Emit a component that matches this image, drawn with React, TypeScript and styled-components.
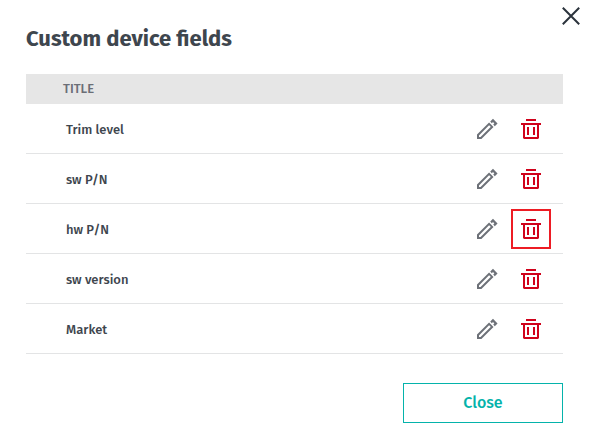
import React from "react";
import styled, { createGlobalStyle } from "styled-components";

const GlobalStyle = createGlobalStyle`
  *, *::before, *::after { box-sizing: border-box; }
  body {
    margin: 0;
    background: #fff;
    color: #3e464e;
    font-family: "Fira Sans", "Noto Sans", sans-serif;
    overflow: hidden;
  }
`;

const Dialog = styled.main`
  position: relative;
  width: 589px;
  height: 428px;
  padding: 24px 26px 5px;
  display: flex;
  flex-direction: column;
  background: #fff;
`;

const DismissButton = styled.button`
  position: absolute;
  top: 6px;
  right: 8px;
  width: 20px;
  height: 20px;
  padding: 0;
  border: 0;
  background: none;
  color: #2b333c;
  svg { display: block; }
`;

const Heading = styled.h1`
  margin: 0 0 20px;
  height: 30px;
  font-size: 22px;
  line-height: 30px;
  font-weight: 700;
  white-space: nowrap;
`;

const Table = styled.section`
  width: 537px;
`;

const TableHeader = styled.div`
  height: 30px;
  padding-left: 37px;
  background: #e6e6e6;
  color: #6b6e76;
  font-size: 13px;
  line-height: 30px;
  font-weight: 500;
`;

const Row = styled.div`
  height: 50px;
  padding: 0 12px 0 40px;
  display: flex;
  align-items: center;
  border-bottom: 1px solid #e3e4e5;
`;

const FieldName = styled.div`
  flex: 1;
  padding-top: 2px;
  font-size: 13px;
  line-height: 20px;
  font-weight: 500;
  white-space: nowrap;
`;

const IconButton = styled.button<{ $tone: string; $outlined?: boolean }>`
  width: 40px;
  height: 40px;
  margin: 1px 0 0 4px;
  padding: 0;
  display: flex;
  align-items: center;
  justify-content: center;
  border: 2px solid ${(p) => (p.$outlined ? "#ed1c24" : "transparent")};
  background: none;
  color: ${(p) => p.$tone};
  svg { display: block; }
`;

const CloseButton = styled.button`
  width: 160px;
  height: 40px;
  margin: 29px 0 0 377px;
  padding: 0;
  border: 1px solid #05b3ab;
  background: #fff;
  color: #05b3ab;
  font: 500 16px/24px "Fira Sans", "Noto Sans", sans-serif;
`;

const PencilIcon = () => (
  <svg width="22" height="22" viewBox="0 0 22 22" fill="none" stroke="currentColor" strokeWidth="2">
    <path d="M2 20v-3L13.1 5.9l3 3L5 20z" />
    <path d="M15 4.4 17 2.4 20 5.4 18 7.4" strokeWidth="2.2" />
  </svg>
);

const TrashIcon = () => (
  <svg width="20" height="20" viewBox="0 0 20 20" fill="currentColor">
    <path d="M5 0h10v2H5zM0 4h20v2H0zM2 6h2v12h12V6h2v13l-1 1H3l-1-1zM6 8h2v8H6zM12 8h2v8h-2z" />
  </svg>
);

const fields = [
  { name: "Trim level" },
  { name: "sw P/N" },
  { name: "hw P/N", highlighted: true },
  { name: "sw version" },
  { name: "Market" },
];

export default function App() {
  return (
    <>
      <GlobalStyle />
      <Dialog>
        <DismissButton aria-label="Dismiss">
          <svg width="20" height="20" viewBox="0 0 20 20" fill="none" stroke="currentColor" strokeWidth="2">
            <path d="M1.8 1.8 18.2 18.2M18.2 1.8 1.8 18.2" />
          </svg>
        </DismissButton>
        <Heading>Custom device fields</Heading>
        <Table>
          <TableHeader>TITLE</TableHeader>
          {fields.map((field) => (
            <Row key={field.name}>
              <FieldName>{field.name}</FieldName>
              <IconButton $tone="#6d7178" aria-label={`Edit ${field.name}`}><PencilIcon /></IconButton>
              <IconButton $tone="#d0021b" $outlined={field.highlighted} aria-label={`Delete ${field.name}`}>
                <TrashIcon />
              </IconButton>
            </Row>
          ))}
        </Table>
        <CloseButton>Close</CloseButton>
      </Dialog>
    </>
  );
}
